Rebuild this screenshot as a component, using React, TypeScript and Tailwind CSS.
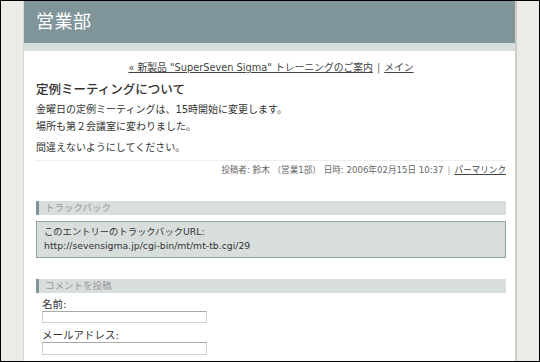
import React from "react";

const font = { fontFamily: '"DejaVu Sans", "Noto Sans CJK JP", sans-serif' };

export default function App() {
  return (
    <div
      className="w-[540px] h-[362px] overflow-hidden border border-black bg-[#edebe7] flex"
      style={font}
    >
      <div className="w-[22px] shrink-0" />
      <div className="w-[494px] shrink-0 border-l border-[#d9d6d1] border-r-2 border-r-[#d0ccc7] bg-white flex flex-col">
        <div className="h-[42px] bg-[#7f9599] flex items-center pl-[12px]">
          <span className="text-white text-[18px] leading-none tracking-[0.5px]">営業部</span>
        </div>
        <div className="h-[8px] bg-[#d8dedc]" />
        <div className="pl-[12px] pr-[9px] text-[#333]">
          <div className="mt-[10px] text-center text-[9.8px] leading-[14px] text-[#444]">
            <a className="underline">« 新製品 "SuperSeven Sigma" トレーニングのご案内</a>
            <span className="mx-[4px] text-[#666]">|</span>
            <a className="underline">メイン</a>
          </div>
          <h1 className="mt-[7px] text-[12.5px] leading-[16px] font-medium text-[#333]">定例ミーティングについて</h1>
          <div className="mt-[3px] text-[10px] leading-[17px]">
            <p>金曜日の定例ミーティングは、15時開始に変更します。</p>
            <p>場所も第２会議室に変わりました。</p>
            <p className="mt-[4px]">間違えないようにしてください。</p>
          </div>
          <div className="mt-[4px] border-t border-[#eeeeee] pt-[2px] text-right text-[8.6px] leading-[14px] text-[#666]">
            投稿者: 鈴木 （営業1部） 日時: 2006年02月15日 10:37
            <span className="mx-[4px] text-[#999]">|</span>
            <a className="underline text-[#444]">パーマリンク</a>
          </div>
          <div className="mt-[24px] h-[14px] bg-[#d8dedc] border-l-[3px] border-[#7f9599] pl-[6px] flex items-center text-[9.5px] text-[#999]">
            トラックバック
          </div>
          <div className="mt-[6px] h-[37px] bg-[#d8dedc] border border-[#93a3a5] pl-[7px] pt-[3px] text-[9.3px] leading-[14px] text-[#333]">
            <div>このエントリーのトラックバックURL:</div>
            <div>http://sevensigma.jp/cgi-bin/mt/mt-tb.cgi/29</div>
          </div>
          <div className="mt-[21px] h-[14px] bg-[#d8dedc] border-l-[3px] border-[#7f9599] pl-[6px] flex items-center text-[9.5px] text-[#999]">
            コメントを投稿
          </div>
          <div className="pl-[6px] text-[10.5px] text-[#333]">
            <div className="mt-[4px] leading-[14px]">名前:</div>
            <div className="w-[165px] h-[12px] bg-white border border-[#cfcfcf] border-t-[#a8a8a8]" />
            <div className="mt-[5px] leading-[14px]">メールアドレス:</div>
            <div className="w-[165px] h-[13px] bg-white border border-[#cfcfcf] border-t-[#a8a8a8]" />
          </div>
        </div>
      </div>
      <div className="flex-1" />
    </div>
  );
}
